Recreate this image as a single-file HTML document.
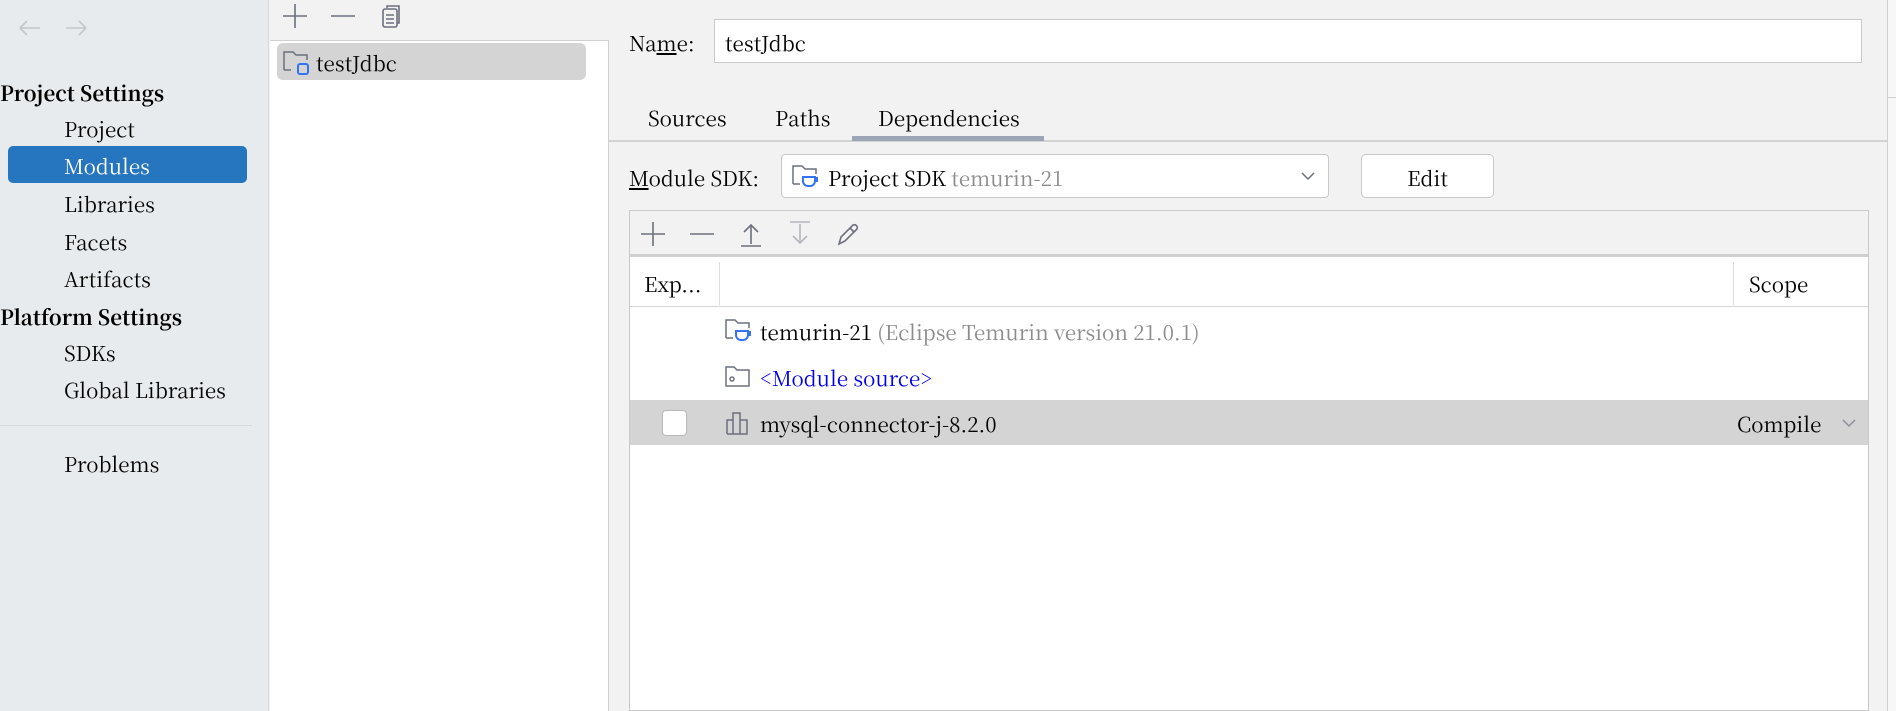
<!DOCTYPE html>
<html><head><meta charset="utf-8"><style>
*{margin:0;padding:0;box-sizing:border-box}
body{width:1896px;height:711px;overflow:hidden;background:#f2f2f2;font-family:"Noto Serif CJK SC","Liberation Serif","DejaVu Serif",serif;font-size:20.6px;color:#000;position:relative}
.a{position:absolute;white-space:nowrap}
.t{line-height:26px;transform:translateY(-13px)}
</style></head><body>
<div class="a" style="left:0;top:0;width:269px;height:711px;background:#e8ebee;border-right:1px solid #d6d9dc"></div>
<svg class="a" style="left:18px;top:18px" width="80" height="20" viewBox="0 0 80 20" fill="none" stroke="#c4c6c9" stroke-width="1.6"><path d="M2 10H22M2 10L9 3M2 10L9 17"/><path d="M68 10H48M68 10L61 3M68 10L61 17"/></svg>
<div class="a t" style="left:0;top:92px;font-weight:bold">Project Settings</div>
<div class="a t" style="left:64px;top:128px">Project</div>
<div class="a" style="left:8px;top:146px;width:239px;height:37px;background:#2675bf;border-radius:5px"></div>
<div class="a t" style="left:64px;top:165px;color:#fff">Modules</div>
<div class="a t" style="left:64px;top:203px">Libraries</div>
<div class="a t" style="left:64px;top:241px">Facets</div>
<div class="a t" style="left:64px;top:278px">Artifacts</div>
<div class="a t" style="left:0;top:316px;font-weight:bold">Platform Settings</div>
<div class="a t" style="left:64px;top:352px">SDKs</div>
<div class="a t" style="left:64px;top:389px">Global Libraries</div>
<div class="a" style="left:0;top:425px;width:252px;height:1px;background:#d8dbde"></div>
<div class="a t" style="left:64px;top:463px">Problems</div>
<div class="a" style="left:270px;top:0;width:339px;height:711px;background:#fff;border-right:1px solid #d0d0d0"></div>
<div class="a" style="left:270px;top:0;width:339px;height:41px;background:#f2f2f2;border-bottom:1px solid #d0d0d0"></div>
<svg class="a" style="left:282px;top:3px" width="130" height="26" viewBox="0 0 130 26" fill="none" stroke="#6c707e" stroke-width="1.6"><path d="M13 1V25M1 13H25"/><path d="M49 13H73"/><rect x="101" y="6" width="14" height="18" rx="2"/><path d="M105 5V3h12v17h-2M104 12h8M104 16h8M104 20h8"/></svg>
<div class="a" style="left:277px;top:43px;width:309px;height:37px;background:#d4d4d4;border-radius:6px"></div>
<svg class="a" style="left:282px;top:49px" width="30" height="28" viewBox="0 0 30 28" fill="none"><path d="M2 21V3h9l3 3h11v5" stroke="#6c707e" stroke-width="1.5"/><path d="M2 21h7" stroke="#6c707e" stroke-width="1.5"/><rect x="16" y="15" width="10" height="10" rx="2" stroke="#3574f0" stroke-width="2"/></svg>
<div class="a t" style="left:316px;top:62px">testJdbc</div>
<div class="a t" style="left:629px;top:42px">Na<u>m</u>e:</div>
<div class="a" style="left:714px;top:19px;width:1148px;height:44px;background:#fff;border:1px solid #c9c9c9"></div>
<div class="a t" style="left:725px;top:42px">testJdbc</div>
<div class="a t" style="left:648px;top:117px">Sources</div>
<div class="a t" style="left:775px;top:117px">Paths</div>
<div class="a t" style="left:878px;top:117px">Dependencies</div>
<div class="a" style="left:609px;top:140px;width:1278px;height:2px;background:#d3d3d3"></div>
<div class="a" style="left:852px;top:136px;width:192px;height:5px;background:#9ca6b6"></div>
<div class="a t" style="left:629px;top:177px"><u>M</u>odule SDK:</div>
<div class="a" style="left:781px;top:154px;width:548px;height:44px;background:#fff;border:1px solid #c9c9c9;border-radius:4px"></div>
<svg class="a" style="left:791px;top:163px" width="30" height="28" viewBox="0 0 30 28" fill="none"><path d="M2 21V3h9l3 3h11v5" stroke="#6c707e" stroke-width="1.5"/><path d="M2 21h7" stroke="#6c707e" stroke-width="1.5"/><path d="M12 14h12v4a5 5 0 0 1-5 5h-2a5 5 0 0 1-5-5z M24 15h2v3h-2" stroke="#3574f0" stroke-width="2"/></svg>
<div class="a t" style="left:828px;top:177px">Project SDK <span style="color:#8c8c8c">temurin-21</span></div>
<svg class="a" style="left:1300px;top:171px" width="16" height="10" viewBox="0 0 16 10" fill="none" stroke="#6c707e" stroke-width="1.5"><path d="M2 2l6 6 6-6"/></svg>
<div class="a" style="left:1361px;top:154px;width:133px;height:44px;background:#fff;border:1px solid #c9c9c9;border-radius:5px"></div>
<div class="a t" style="left:1361px;top:177px;width:133px;text-align:center">Edit</div>
<div class="a" style="left:629px;top:210px;width:1240px;height:501px;background:#fff;border:1px solid #c9c9c9"></div>
<div class="a" style="left:630px;top:211px;width:1238px;height:46px;background:#f2f2f2;border-bottom:3px solid #d0d0d0"></div>
<svg class="a" style="left:640px;top:220px" width="230" height="28" viewBox="0 0 230 28" fill="none" stroke="#6c707e" stroke-width="1.6"><path d="M13 2V26M1 14H25"/><path d="M50 14H74"/><path d="M111 24V5M104 12l7-7 7 7M101 26h20" /><path d="M160 4v19M153 16l7 7 7-7M150 2h20" stroke="#b4b7be"/><path d="M199 24l2-7 12-12a3 3 0 0 1 4 4L205 21z M210 8l4 4"/></svg>
<div class="a" style="left:630px;top:306px;width:1238px;height:1px;background:#d6d6d6"></div>
<div class="a" style="left:719px;top:262px;width:1px;height:43px;background:#dcdcdc"></div>
<div class="a" style="left:1733px;top:262px;width:1px;height:43px;background:#dcdcdc"></div>
<div class="a t" style="left:644px;top:283px">Exp...</div>
<div class="a t" style="left:1749px;top:283px">Scope</div>
<svg class="a" style="left:724px;top:317px" width="30" height="28" viewBox="0 0 30 28" fill="none"><path d="M2 21V3h9l3 3h11v5" stroke="#6c707e" stroke-width="1.5"/><path d="M2 21h7" stroke="#6c707e" stroke-width="1.5"/><path d="M12 14h12v4a5 5 0 0 1-5 5h-2a5 5 0 0 1-5-5z M24 15h2v3h-2" stroke="#3574f0" stroke-width="2"/></svg>
<div class="a t" style="left:760px;top:331px">temurin-21 <span style="color:#8c8c8c">(Eclipse Temurin version 21.0.1)</span></div>
<svg class="a" style="left:724px;top:364px" width="28" height="26" viewBox="0 0 28 26" fill="none" stroke="#6c707e" stroke-width="1.5"><path d="M2 22V3h8l3 3h12v16z"/><circle cx="8" cy="15" r="2"/></svg>
<div class="a t" style="left:760px;top:377px;color:#0000ee">&lt;Module source&gt;</div>
<div class="a" style="left:630px;top:400px;width:1238px;height:45px;background:#d4d4d4"></div>
<div class="a" style="left:662px;top:410px;width:25px;height:26px;background:#fff;border:1px solid #b8b8b8;border-radius:4px"></div>
<svg class="a" style="left:725px;top:410px" width="28" height="26" viewBox="0 0 28 26" fill="none" stroke="#6c707e" stroke-width="1.5"><path d="M2 24V10h6v14M8 24V3h7v21M15 24V10h7v14H2"/></svg>
<div class="a t" style="left:760px;top:423px">mysql-connector-j-8.2.0</div>
<div class="a t" style="left:1737px;top:423px">Compile</div>
<svg class="a" style="left:1841px;top:418px" width="16" height="10" viewBox="0 0 16 10" fill="none" stroke="#8c8f96" stroke-width="1.5"><path d="M2 2l6 6 6-6"/></svg>
<div class="a" style="left:1887px;top:0;width:9px;height:711px;background:#f7f7f7;border-left:1px solid #d0d0d0"></div>
<div class="a" style="left:1887px;top:97px;width:9px;height:1px;background:#d0d0d0"></div>
</body></html>
